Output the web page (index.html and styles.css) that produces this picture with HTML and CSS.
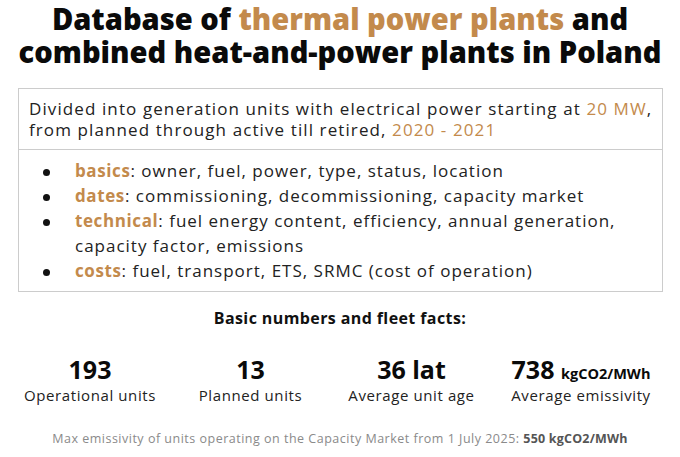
FILE: index.html
```html
<!DOCTYPE html>
<html lang="en">
<head>
<meta charset="utf-8">
<title>Database of thermal power plants</title>
<link rel="stylesheet" href="styles.css">
</head>
<body>
<div class="page">
  <h1 class="title">Database of <span class="accent">thermal power plants</span> and<br>combined heat-and-power plants in Poland</h1>
  <div class="box">
    <p class="intro">Divided into generation units with electrical power starting at <span class="accent">20 MW</span>,<br>from planned through active till retired, <span class="accent">2020 - 2021</span></p>
    <ul class="list">
      <li><span class="txt"><b class="accent">basics</b>: owner, fuel, power, type, status, location</span></li>
      <li><span class="txt"><b class="accent">dates</b>: commissioning, decommissioning, capacity market</span></li>
      <li><span class="txt"><b class="accent">technical</b>: fuel energy content, efficiency, annual generation, capacity factor, emissions</span></li>
      <li><span class="txt"><b class="accent">costs</b>: fuel, transport, ETS, SRMC (cost of operation)</span></li>
    </ul>
  </div>
  <h2 class="subtitle">Basic numbers and fleet facts:</h2>
  <div class="stats">
    <div class="stat"><div class="num">193</div><div class="label">Operational units</div></div>
    <div class="stat"><div class="num">13</div><div class="label">Planned units</div></div>
    <div class="stat"><div class="num">36 lat</div><div class="label">Average unit age</div></div>
    <div class="stat"><div class="num">738 <span class="unit">kgCO2/MWh</span></div><div class="label">Average emissivity</div></div>
  </div>
  <p class="foot">Max emissivity of units operating on the Capacity Market from 1 July 2025: <b>550 kgCO2/MWh</b></p>
</div>
</body>
</html>
```
FILE: styles.css
```css
html, body {
  margin: 0;
  padding: 0;
  background: #ffffff;
}
.page {
  width: 680px;
  font-family: "Open Sans", "Noto Sans", sans-serif;
  color: #1a1a1a;
}
.accent {
  color: #c38a4c;
}
.title {
  margin: 0;
  padding-top: 3px;
  text-align: center;
  font-size: 29.1px;
  line-height: 33px;
  font-weight: 800;
  color: #0a0a0a;
}
.box {
  margin: 19px 17px 0 18px;
  border: 1.5px solid #cccccc;
}
.intro {
  margin: 0;
  padding: 9px 6px 9px 10px;
  font-size: 17px;
  line-height: 21px;
  letter-spacing: 1.1px;
  color: #222;
}
.list {
  list-style: none;
  margin: 0;
  border-top: 1.5px solid #cccccc;
  padding: 8px 10px 8px 22px;
  font-size: 17px;
  line-height: 25px;
  letter-spacing: 1px;
  color: #222;
}
.list li {
  display: grid;
  grid-template-columns: 34px 1fr;
}
.list li::before {
  content: "";
  width: 7px;
  height: 7px;
  border-radius: 50%;
  background: #111;
  margin: 11px 0 0 2px;
}
.list b {
  font-weight: 700;
  letter-spacing: 0.6px;
}
.subtitle {
  margin: 16px 0 0 0;
  text-align: center;
  font-size: 16px;
  line-height: 20px;
  font-weight: 700;
  letter-spacing: 0.4px;
  color: #111;
}
.stats {
  display: grid;
  grid-template-columns: 160px 161px 161px 178px;
  padding-left: 10px;
  margin-top: 27px;
  text-align: center;
}
.num {
  font-size: 25px;
  line-height: 28px;
  height: 28px;
  font-weight: 700;
  color: #0a0a0a;
}
.unit {
  font-size: 14.5px;
  line-height: 14px;
  font-weight: 700;
}
.label {
  margin-top: 2px;
  font-size: 15px;
  line-height: 20px;
  letter-spacing: 0.6px;
  color: #222;
}
.foot {
  margin: 26px 0 0 0;
  text-align: center;
  font-size: 12.5px;
  line-height: 16px;
  letter-spacing: 0.5px;
  color: #8a8a8a;
}
.foot b {
  color: #555;
  font-weight: 700;
  letter-spacing: 0.2px;
}
```
